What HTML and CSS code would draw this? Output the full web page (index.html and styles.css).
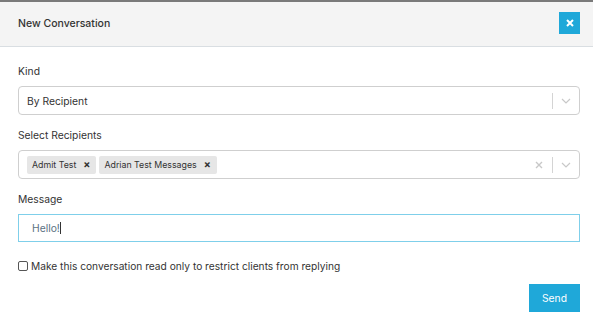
FILE: index.html
```html
<!DOCTYPE html>
<html>
<head>
<meta charset="utf-8">
<link rel="stylesheet" href="styles.css">
</head>
<body>
<div class="modal">
  <div class="modal-header">
    <span class="modal-title">New Conversation</span>
    <button class="close-btn" aria-label="Close">
      <svg width="8" height="8" viewBox="0 0 8 8"><path d="M1 1L7 7M7 1L1 7" stroke="#fff" stroke-width="2"/></svg>
    </button>
  </div>
  <div class="modal-body">
    <div class="field">
      <label class="field-label">Kind</label>
      <div class="select">
        <div class="select-value">By Recipient</div>
        <div class="select-indicators">
          <span class="sep"></span>
          <svg class="chev" width="10" height="6" viewBox="0 0 10 6"><path d="M1 1l4 4 4-4" fill="none" stroke="#c8c8c8" stroke-width="1.2"/></svg>
        </div>
      </div>
    </div>
    <div class="field">
      <label class="field-label">Select Recipients</label>
      <div class="select">
        <div class="select-value tags">
          <span class="tag">Admit Test <span class="tag-x">×</span></span>
          <span class="tag">Adrian Test Messages <span class="tag-x">×</span></span>
        </div>
        <div class="select-indicators">
          <svg class="clear" width="8" height="8" viewBox="0 0 8 8"><path d="M1 1L7 7M7 1L1 7" stroke="#c8c8c8" stroke-width="1.4"/></svg>
          <span class="sep"></span>
          <svg class="chev" width="10" height="6" viewBox="0 0 10 6"><path d="M1 1l4 4 4-4" fill="none" stroke="#c8c8c8" stroke-width="1.2"/></svg>
        </div>
      </div>
    </div>
    <div class="field">
      <label class="field-label">Message</label>
      <div class="text-input"><span>Hello!</span><span class="caret"></span></div>
    </div>
    <label class="check-row"><span class="checkbox"></span>Make this conversation read only to restrict clients from replying</label>
    <div class="actions">
      <button class="send-btn">Send</button>
    </div>
  </div>
</div>
</body>
</html>
```

FILE: styles.css
```css
* { box-sizing: border-box; }
html, body { margin: 0; padding: 0; background: #fff; }
body {
  font-family: Inter, "Noto Sans", "Liberation Sans", sans-serif;
  color: #333;
  width: 593px;
  height: 329px;
  overflow: hidden;
}
.modal { width: 593px; }
.modal-header {
  border-top: 2px solid #7a7a7a;
  background: #f4f4f4;
  border-bottom: 1px solid #d9dee2;
  height: 47px;
  display: flex;
  align-items: center;
  justify-content: space-between;
  padding: 0 13px 2px 18px;
}
.modal-title {
  font-size: 10.5px;
  font-weight: 500;
  color: #333;
}
.close-btn {
  width: 21px;
  height: 22px;
  border: 0;
  padding: 0;
  background: #1fa8d9;
  display: flex;
  align-items: center;
  justify-content: center;
}
.modal-body {
  padding: 17px 13px 0 18px;
}
.field { display: flex; flex-direction: column; }
.field-label {
  font-size: 10.3px;
  line-height: 14px;
  color: #333;
  margin-bottom: 8px;
}
.field + .field { margin-top: 13px; }
.select {
  height: 29px;
  border: 1px solid #cfcfcf;
  border-radius: 4px;
  display: flex;
  align-items: center;
}
.select-value {
  flex: 1;
  font-size: 10.3px;
  padding-left: 8px;
  color: #333;
}
.tags { display: flex; gap: 3px; padding-left: 8px; }
.tag {
  background: #e6e6e6;
  border-radius: 2px;
  height: 18px;
  font-size: 8.8px;
  line-height: 18px;
  padding: 0 6px 0 5px;
  display: inline-flex;
  align-items: center;
  color: #333;
}
.tag-x {
  font-weight: 700;
  font-size: 10.5px;
  margin-left: 7px;
  color: #333;
}
.select-indicators {
  display: flex;
  align-items: center;
  padding-right: 8px;
}
.clear { margin-right: 9px; }
.sep {
  width: 1px;
  height: 16px;
  background: #d4d4d4;
  margin-right: 8px;
}
.text-input {
  height: 28px;
  border: 1px solid #7fcfea;
  display: flex;
  align-items: center;
  padding-left: 13px;
  font-size: 10.3px;
  color: #5b7283;
}
.caret {
  width: 1px;
  height: 12px;
  background: #333;
}
.check-row {
  display: flex;
  align-items: center;
  margin-top: 18px;
  font-size: 10.2px;
  color: #333;
}
.checkbox {
  width: 10px;
  height: 10px;
  border: 1px solid #555;
  border-radius: 2px;
  margin-right: 3px;
  background: #fff;
}
.actions {
  display: flex;
  justify-content: flex-end;
  margin-top: 12px;
}
.send-btn {
  width: 51px;
  height: 28px;
  border: 0;
  padding: 0;
  background: #1fa8d9;
  color: #fff;
  font-family: inherit;
  font-size: 10.3px;
}
```
